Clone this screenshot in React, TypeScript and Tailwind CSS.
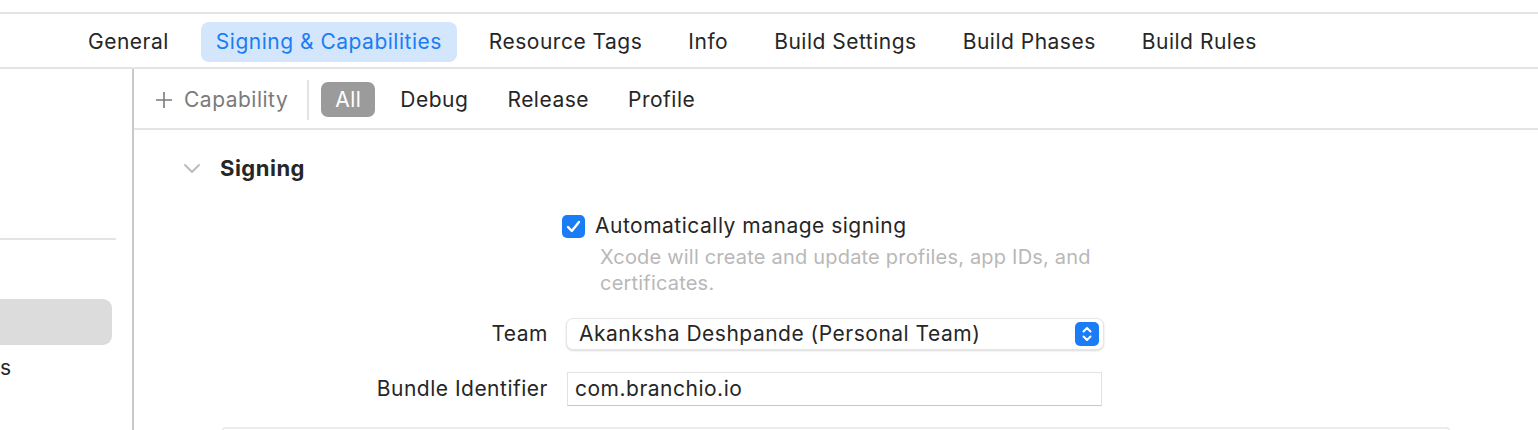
import React from 'react'

const tabs = ['General', 'Signing & Capabilities', 'Resource Tags', 'Info', 'Build Settings', 'Build Phases', 'Build Rules']
const filters = ['All', 'Debug', 'Release', 'Profile']

export default function App() {
    return (
        <div className="w-[1538px] h-[430px] overflow-hidden bg-white text-[#262626] font-['Inter','Noto_Sans',sans-serif] text-[21px] tracking-[0.5px] flex flex-col">
            <div className="h-[12px] shrink-0" />
            <div className="h-[2px] bg-[#e4e4e4] shrink-0" />

            {/* editor tabs */}
            <div className="h-[53px] shrink-0 flex items-center gap-[18px] pl-[74px] pt-[2px]">
                {tabs.map((t, i) => (
                    <div
                        key={t}
                        className={
                            i === 1
                                ? 'h-[40px] px-[15px] flex items-center rounded-[8px] bg-[#d3e6fb] text-[#1a7df5]'
                                : 'h-[40px] px-[14px] flex items-center'
                        }
                    >
                        {t}
                    </div>
                ))}
            </div>
            <div className="h-[2px] bg-[#e4e4e4] shrink-0" />

            <div className="flex flex-1 min-h-0">
                {/* sidebar */}
                <div className="w-[132px] shrink-0 overflow-hidden flex flex-col">
                    <div className="h-[169px] shrink-0" />
                    <div className="h-[2px] w-[116px] bg-[#e4e4e4]" />
                    <div className="h-[59px] shrink-0" />
                    <div className="h-[46px] w-[112px] rounded-r-[9px] bg-[#dcdcdc]" />
                    <div className="h-[46px] flex items-center">s</div>
                </div>
                <div className="w-[2px] bg-[#c9c9c9] shrink-0" />

                {/* main */}
                <div className="flex-1 flex flex-col">
                    <div className="h-[59px] shrink-0 flex items-center pl-[21px] pt-[2px]">
                        <div className="flex items-center gap-[11px] text-[#7b7b7b]">
                            <svg width="18" height="18" viewBox="0 0 18 18" fill="none" stroke="#7b7b7b" strokeWidth="1.6">
                                <path d="M9 1v16M1 9h16" />
                            </svg>
                            <span>Capability</span>
                        </div>
                        <div className="w-[2px] h-[40px] bg-[#e4e4e4] ml-[19px] mr-[12px]" />
                        <div className="flex items-center gap-[11px]">
                            {filters.map((f, i) => (
                                <div
                                    key={f}
                                    className={
                                        i === 0
                                            ? 'h-[35px] px-[14px] flex items-center rounded-[7px] bg-[#9b9b9b] text-white'
                                            : 'h-[35px] px-[14px] flex items-center'
                                    }
                                >
                                    {f}
                                </div>
                            ))}
                        </div>
                    </div>
                    <div className="h-[2px] bg-[#e4e4e4] shrink-0" />

                    {/* Signing section */}
                    <div className="flex items-center h-[36px] mt-[20px] pl-[49px] shrink-0">
                        <svg width="18" height="12" viewBox="0 0 18 12" fill="none" stroke="#bdbdbd" strokeWidth="2" strokeLinecap="round" strokeLinejoin="round">
                            <path d="M2 3l7 7 7-7" />
                        </svg>
                        <span className="ml-[19px] text-[22px] font-bold">Signing</span>
                    </div>

                    <div className="grid grid-cols-[414px_1fr] gap-x-[18px] mt-[26px]">
                        <div />
                        <div className="flex items-center h-[28px] -ml-[4px]">
                            <div className="w-[23px] h-[23px] rounded-[5px] bg-[#1a7df5] flex items-center justify-center">
                                <svg width="15" height="13" viewBox="0 0 15 13" fill="none" stroke="white" strokeWidth="2.4" strokeLinecap="round" strokeLinejoin="round">
                                    <path d="M2 7l3.8 4L13 2" />
                                </svg>
                            </div>
                            <span className="ml-[10px]">Automatically manage signing</span>
                        </div>

                        <div />
                        <div className="pl-[34px] pt-[4px] text-[20px] tracking-[0.2px] leading-[26px] text-[#b8b8b8]">
                            Xcode will create and update profiles, app IDs, and
                            <br />
                            certificates.
                        </div>

                        <div className="flex items-center justify-end h-[32px] mt-[22px]">Team</div>
                        <div className="mt-[22px] w-[538px] h-[32px] rounded-[7px] bg-white border border-[#e6e6e6] shadow-[0_1px_2px_rgba(0,0,0,0.15)] flex items-center justify-between pl-[12px] pr-[4px]">
                            <span>Akanksha Deshpande (Personal Team)</span>
                            <div className="w-[24px] h-[24px] rounded-[5px] bg-[#1a7df5] flex items-center justify-center">
                                <svg width="12" height="18" viewBox="0 0 12 18" fill="none" stroke="white" strokeWidth="2" strokeLinecap="round" strokeLinejoin="round">
                                    <path d="M2.5 6.5L6 3l3.5 3.5M2.5 11.5L6 15l3.5-3.5" />
                                </svg>
                            </div>
                        </div>

                        <div className="flex items-center justify-end h-[34px] mt-[22px]">Bundle Identifier</div>
                        <div className="mt-[22px] ml-[1px] w-[535px] h-[34px] border border-[#e2e2e2] border-b-[#c8c8c8] flex items-center pl-[7px]">
                            com.branchio.io
                        </div>
                    </div>

                    <div className="ml-[88px] mt-[21px] w-[1228px] h-[20px] rounded-t-[8px] border-t-2 border-x-2 border-[#ececec]" />
                </div>
            </div>
        </div>
    )
}
